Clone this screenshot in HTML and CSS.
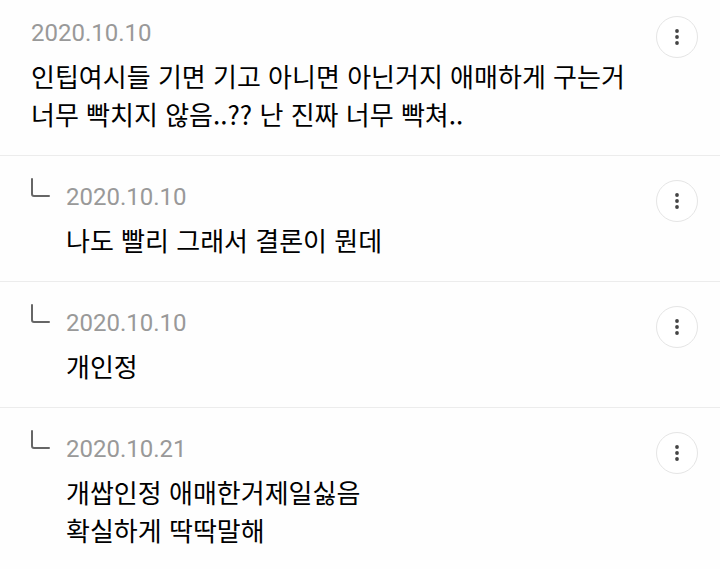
FILE: index.html
```html
<!DOCTYPE html>
<html lang="ko">
<head>
  <meta charset="UTF-8" />
  <meta name="viewport" content="width=device-width, initial-scale=1" />
  <title>댓글</title>
  <link rel="stylesheet" href="styles.css">
</head>
<body>
  <main>
    <ul class="comments">
      <li class="comment">
        <div class="content">
          <time class="date" datetime="2020-10-10">2020.10.10</time>
          <p class="text">인팁여시들 기면 기고 아니면 아닌거지 애매하게 구는거<br>너무 빡치지 않음..?? 난 진짜 너무 빡쳐..</p>
        </div>
        <button type="button" class="more" aria-label="더보기">
          <svg width="6" height="18" viewBox="0 0 6 18"><circle cx="3" cy="3" r="1.9"/><circle cx="3" cy="9" r="1.9"/><circle cx="3" cy="15" r="1.9"/></svg>
        </button>
      </li>
      <li class="comment reply">
        <svg class="arrow" width="19" height="19" viewBox="0 0 19 19"><path d="M1 1V16Q1 18 3 18H18"/></svg>
        <div class="content">
          <time class="date" datetime="2020-10-10">2020.10.10</time>
          <p class="text">나도 빨리 그래서 결론이 뭔데</p>
        </div>
        <button type="button" class="more" aria-label="더보기">
          <svg width="6" height="18" viewBox="0 0 6 18"><circle cx="3" cy="3" r="1.9"/><circle cx="3" cy="9" r="1.9"/><circle cx="3" cy="15" r="1.9"/></svg>
        </button>
      </li>
      <li class="comment reply">
        <svg class="arrow" width="19" height="19" viewBox="0 0 19 19"><path d="M1 1V16Q1 18 3 18H18"/></svg>
        <div class="content">
          <time class="date" datetime="2020-10-10">2020.10.10</time>
          <p class="text">개인정</p>
        </div>
        <button type="button" class="more" aria-label="더보기">
          <svg width="6" height="18" viewBox="0 0 6 18"><circle cx="3" cy="3" r="1.9"/><circle cx="3" cy="9" r="1.9"/><circle cx="3" cy="15" r="1.9"/></svg>
        </button>
      </li>
      <li class="comment reply">
        <svg class="arrow" width="19" height="19" viewBox="0 0 19 19"><path d="M1 1V16Q1 18 3 18H18"/></svg>
        <div class="content">
          <time class="date" datetime="2020-10-21">2020.10.21</time>
          <p class="text">개쌉인정 애매한거제일싫음<br>확실하게 딱딱말해</p>
        </div>
        <button type="button" class="more" aria-label="더보기">
          <svg width="6" height="18" viewBox="0 0 6 18"><circle cx="3" cy="3" r="1.9"/><circle cx="3" cy="9" r="1.9"/><circle cx="3" cy="15" r="1.9"/></svg>
        </button>
      </li>
    </ul>
  </main>
</body>
</html>
```
FILE: styles.css
```css
body {
  margin: 0;
  background: #fefefe;
  font-family: 'Noto Sans CJK KR', sans-serif;
}
.comments {
  margin: 0;
  padding: 0;
  list-style: none;
}
.comment {
  display: flex;
  align-items: flex-start;
  padding: 16px 22px 22px 31px;
}
.reply {
  padding-top: 22px;
  border-top: 1px solid #ececec;
}
.reply .content,
.reply .more {
  margin-top: 2px;
}
.content {
  flex: 1;
}
.date {
  display: block;
  font-family: Roboto, sans-serif;
  font-size: 24px;
  line-height: 34px;
  color: #999;
}
.text {
  margin: 7px 0 0;
  font-size: 26px;
  line-height: 38px;
  color: #000;
}
.arrow {
  flex: none;
  margin-right: 16px;
  fill: none;
  stroke: #666;
  stroke-width: 2;
  stroke-linecap: round;
}
.more {
  display: flex;
  align-items: center;
  justify-content: center;
  flex: none;
  width: 42px;
  height: 42px;
  padding: 0;
  border: 1px solid #e5e5e5;
  border-radius: 50%;
  background: #fff;
  cursor: pointer;
}
.more svg {
  fill: #444;
}
```
